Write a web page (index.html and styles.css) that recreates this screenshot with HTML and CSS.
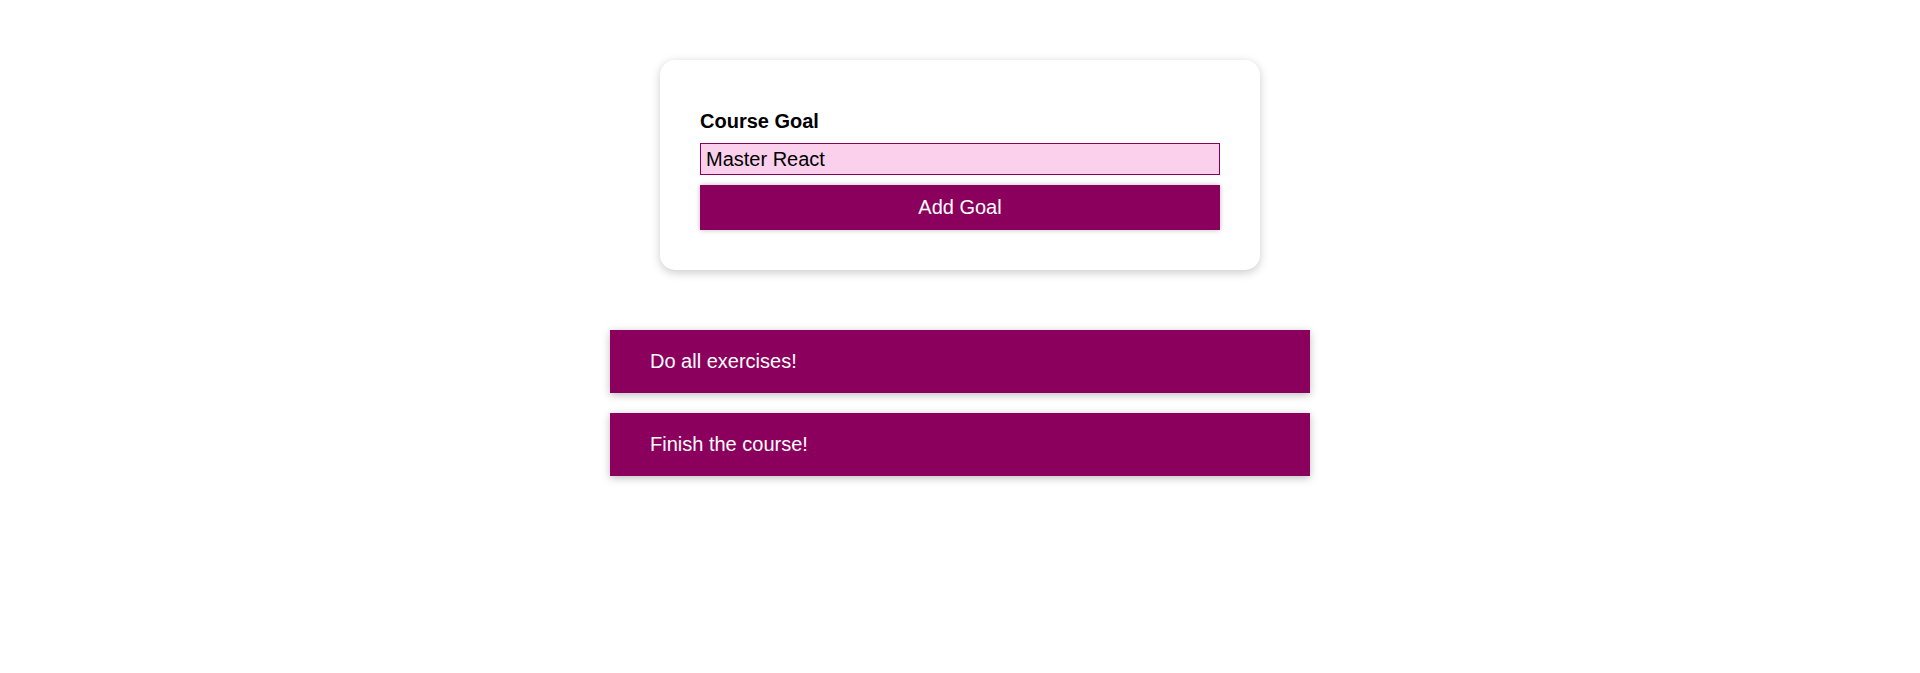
FILE: index.html
```html
<!DOCTYPE html>
<html lang="en">
<head>
<meta charset="utf-8">
<title>Course Goals</title>
<link rel="stylesheet" href="styles.css">
</head>
<body>
  <section class="goal-form">
    <form>
      <div class="form-control">
        <label for="goal">Course Goal</label>
        <input id="goal" class="goal-input" type="text" value="Master React" autofocus>
      </div>
      <button type="button" class="button">Add Goal</button>
    </form>
  </section>
  <section class="goals">
    <ul class="goal-list">
      <li class="goal-item">Do all exercises!</li>
      <li class="goal-item">Finish the course!</li>
    </ul>
  </section>
  <script src="script.js"></script>
</body>
</html>
```

FILE: styles.css
```css
* {
  box-sizing: border-box;
}

html {
  font-size: 20px;
}

body {
  margin: 0;
  background: #ffffff;
  font-family: "Liberation Sans", Arial, sans-serif;
  font-size: 20px;
}

.goal-form {
  width: 30rem;
  max-width: 90%;
  margin: 3rem auto;
  padding: 2rem;
  border-radius: 15px;
  background: #ffffff;
  box-shadow: 0 2.5px 10px rgba(0, 0, 0, 0.2);
}

form {
  margin: 0;
}

.form-control {
  margin: 0.5rem 0;
}

.form-control label {
  display: block;
  font-weight: bold;
  margin-bottom: 0.5rem;
  color: #000;
}

.goal-input {
  display: block;
  width: 100%;
  font: inherit;
  line-height: 1.5rem;
  padding: 0 0.25rem;
  margin: 0;
  border: 1px solid #8b005d;
  background: #fad0ec;
  color: #000;
  caret-color: #000;
  outline: none;
  border-radius: 0;
}

.button {
  display: block;
  width: 100%;
  font: inherit;
  padding: 0.5rem 1.5rem;
  margin: 0;
  border: 1px solid #8b005d;
  color: #ffffff;
  background: #8b005d;
  box-shadow: 0 0 5px rgba(0, 0, 0, 0.26);
  border-radius: 0;
}

.goals {
  width: 35rem;
  max-width: 90%;
  margin: 3rem auto;
}

.goal-list {
  list-style: none;
  margin: 0;
  padding: 0;
}

.goal-item {
  margin: 1rem 0;
  background: #8b005d;
  box-shadow: 0 2px 8px rgba(0, 0, 0, 0.26);
  color: #ffffff;
  padding: 1rem 2rem;
}
```

FILE: script.js
```js
var input = document.getElementById('goal');
input.focus();
var len = input.value.length;
input.setSelectionRange(len, len);
```
